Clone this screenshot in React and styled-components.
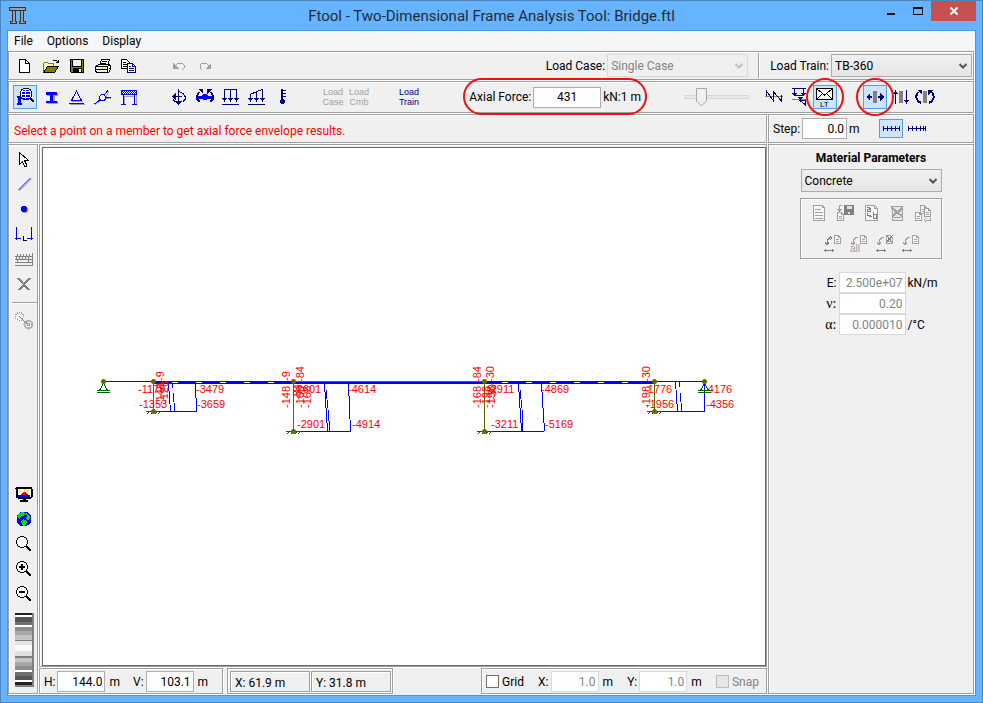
import { useState } from "react";
import styled, { createGlobalStyle, css } from "styled-components";

const GlobalStyle = createGlobalStyle`
  * {
    box-sizing: border-box;
  }
  body {
    margin: 0;
    font-family: Roboto, "Open Sans", sans-serif;
    font-size: 12px;
    line-height: 16px;
    color: #000;
  }
  input, select, button {
    font: inherit;
    color: inherit;
    margin: 0;
  }
`;

const NAVY = "#000080";
const BLUE = "#0000ff";
const GRAY = "#a0a0a0";
const DARK_GRAY = "#808080";
const OLIVE = "#666600";
const GREEN = "#006400";

const chevron = (color) =>
  `url("data:image/svg+xml,%3Csvg xmlns='http://www.w3.org/2000/svg' width='8' height='6'%3E%3Cpath d='M0.5 1L4 4.5L7.5 1' fill='none' stroke='%23${color}' stroke-width='2'/%3E%3C/svg%3E")`;

const thumb = `url("data:image/svg+xml,%3Csvg xmlns='http://www.w3.org/2000/svg' width='11' height='19'%3E%3Cpath d='M0.5 0.5h10v12.5l-5 5l-5-5z' fill='%23f0f0f0' stroke='%23a8a8a8'/%3E%3C/svg%3E")`;

// ---------- window frame ----------

const Window = styled.div`
  display: flex;
  flex-direction: column;
  min-height: 100vh;
  padding: 0 6px 6px;
  background: #66b3ff;
  border: 1px solid #4a86c0;
`;

const TitleBar = styled.header`
  display: flex;
  align-items: flex-start;
  justify-content: space-between;
  height: 29px;
`;

const TitleIcon = styled.svg`
  margin: 6px 0 0 2px;
`;

const Title = styled.h1`
  flex: 1;
  margin: 0;
  padding-left: 80px;
  text-align: center;
  font-size: 15px;
  line-height: 30px;
  font-weight: 400;
  color: #222c38;
`;

const WindowButtons = styled.div`
  display: flex;
`;

const WindowButton = styled.button`
  display: flex;
  align-items: center;
  justify-content: center;
  width: ${({ $close }) => ($close ? "45px" : "27px")};
  height: 20px;
  padding: 0;
  border: 0;
  background: ${({ $close }) => ($close ? "#c75050" : "transparent")};
`;

const Client = styled.div`
  flex: 1;
  display: flex;
  flex-direction: column;
  border: 1px solid #4f94d4;
  background: #f0f0f0;
`;

const MenuBar = styled.nav`
  display: flex;
  height: 20px;
  background: #f5f6f7;
  border-bottom: 1px solid #f0f0f0;
`;

const MenuItem = styled.button`
  padding: 1px 6px 0;
  margin-right: 2px;
  border: 0;
  background: transparent;
  line-height: 18px;
`;

const Panels = styled.div`
  flex: 1;
  display: flex;
  flex-direction: column;
  gap: 1px;
  padding: 0 1px 1px 0;
`;

const etched = css`
  border: 1px solid #a0a0a0;
  box-shadow: inset 1px 1px 0 #fff, 1px 1px 0 #fff;
`;

const Panel = styled.div`
  ${etched}
`;

// ---------- toolbars ----------

const FileBar = styled(Panel)`
  display: flex;
  align-items: flex-start;
  gap: 24px;
  height: 29px;
  padding: 1px 1px 0 3px;
`;

const ToolBar = styled(Panel)`
  display: flex;
  align-items: center;
  gap: 24px;
  height: 32px;
  padding: 0 33px 0 3px;
`;

const Group = styled.div`
  display: flex;
`;

const ToolButton = styled.button`
  position: relative;
  display: flex;
  align-items: center;
  justify-content: center;
  flex: none;
  width: 24px;
  height: ${({ $tall, $short }) => ($tall ? "26px" : $short ? "19px" : "24px")};
  margin: 0 1px;
  padding: 0;
  border: 1px solid ${({ $active }) => ($active ? "#569de5" : "transparent")};
  background: ${({ $active }) => ($active ? "#cce4fc" : "transparent")};

  ${({ $marked }) =>
    $marked &&
    css`
      &::after {
        content: "";
        position: absolute;
        inset: -8px;
        border: 2px solid #f01010;
        border-radius: 50%;
        z-index: 1;
      }
    `}
`;

const TextButton = styled(ToolButton)`
  font-family: "Liberation Sans", sans-serif;
  font-size: 9px;
  line-height: 10px;
  white-space: pre-line;
  color: ${({ disabled }) => (disabled ? GRAY : NAVY)};
`;

const Icon = styled.svg`
  flex: none;
  display: block;
  fill: none;
  overflow: visible;
  shape-rendering: crispEdges;
`;

const CaseArea = styled.div`
  flex: 1;
  display: flex;
  align-items: center;
  justify-content: flex-end;
  height: 25px;
`;

const Field = styled.label`
  display: flex;
  align-items: center;
  gap: 2px;
  white-space: nowrap;
`;

const Divider = styled.div`
  width: 2px;
  height: 25px;
  margin: 0 10px;
  background: #a0a0a0;
  border-right: 1px solid #fff;
`;

const Select = styled.select`
  appearance: none;
  width: 141px;
  height: 23px;
  padding: 0 20px 0 3px;
  border: 1px solid #acacac;
  border-radius: 0;
  background: ${chevron("555555")} no-repeat right 4px center,
    linear-gradient(#f0f0f0, #e5e5e5);
  &:disabled {
    opacity: 1;
    color: #838383;
    border-color: #d9d9d9;
    background: ${chevron("bfbfbf")} no-repeat right 4px center, #efefef;
  }
`;

const Readout = styled.div`
  position: relative;
  display: flex;
  align-items: center;
  margin-left: auto;
  padding: 0 6px;
  gap: 2px;
  &::after {
    content: "";
    position: absolute;
    inset: -9px 0 -7px;
    border: 2px solid #f01010;
    border-radius: 19px;
    pointer-events: none;
  }
`;

const TextInput = styled.input`
  width: ${({ $width }) => $width || "48px"};
  height: 21px;
  padding: 0 2px;
  border: 1px solid #abadb3;
  background: #fff;
  text-align: ${({ $center }) => ($center ? "center" : "right")};
  &:disabled {
    color: #838383;
    border-color: #d9d9d9;
  }
`;

const ScaleSlider = styled.input`
  appearance: none;
  width: 64px;
  height: 20px;
  margin: 0 -13px 0 14px;
  background: transparent;
  &::-webkit-slider-runnable-track {
    height: 4px;
    border: 1px solid #d6d6d6;
    background: #e7eaea;
  }
  &::-webkit-slider-thumb {
    appearance: none;
    width: 11px;
    height: 19px;
    margin-top: -8px;
    background: ${thumb};
  }
`;

const MessageRow = styled.div`
  display: flex;
  gap: 1px;
`;

const Message = styled(Panel)`
  flex: 1;
  height: 29px;
  padding: 1px 5px 0;
  line-height: 30px;
  color: #ff0000;
`;

const StepPanel = styled(Panel)`
  display: flex;
  align-items: center;
  width: 206px;
  height: 29px;
  padding-left: 4px;
`;

const StepGroup = styled(Group)`
  margin-left: auto;
  padding-right: 43px;
`;

// ---------- main area ----------

const Main = styled.main`
  flex: 1;
  display: flex;
  gap: 1px;
`;

const SideBar = styled(Panel)`
  display: flex;
  flex-direction: column;
  align-items: center;
  width: 30px;
  padding: 2px 0 6px 2px;
`;

const SideButton = styled.button`
  display: flex;
  align-items: center;
  justify-content: center;
  flex: none;
  width: 26px;
  height: 25px;
  padding: 0 1px 1px 0;
  border: 0;
  background: transparent;
`;

const SideRule = styled.div`
  width: 25px;
  height: 2px;
  margin: 5px 0;
  background: #a0a0a0;
  border-bottom: 1px solid #fff;
`;

const SideSpacer = styled.div`
  flex: 1;
`;

const Wheel = styled.div`
  width: 19px;
  height: 74px;
  margin-top: 6px;
  border: solid #808080;
  border-width: 0 2px 2px 0;
  background: linear-gradient(
    #222 0 2px, #fff 2px 4px, #555 4px 9px, #707070 9px 12px, #fff 12px 14px,
    #8e8e8e 14px 18px, #a8a8a8 18px 22px, #c4c4c4 22px 27px, #808080 27px 28px,
    #e4e4e4 28px 32px, #fafafa 32px 38px, #e0e0e0 38px 43px, #808080 43px 45px,
    #c4c4c4 45px 49px, #a8a8a8 49px 53px, #8e8e8e 53px 57px, #fff 57px 59px,
    #707070 59px 63px, #555 63px 67px, #fff 67px 69px, #222 69px 72px
  );
`;

const Work = styled.div`
  flex: 1;
  min-width: 0;
  display: flex;
  flex-direction: column;
  gap: 1px;
`;

const CanvasPanel = styled(Panel)`
  flex: 1;
  display: flex;
  min-height: 0;
  padding: 2px 0 0 2px;
`;

const Canvas = styled.svg`
  flex: 1;
  min-width: 0;
  height: auto;
  border: 1px solid #696969;
  background: #fff;
  fill: none;
  text {
    font: 11px "Liberation Sans", Arial, sans-serif;
    fill: #ff0000;
  }
`;

const StatusBar = styled.div`
  display: flex;
  gap: 4px;
`;

const StatusPanel = styled(Panel)`
  display: flex;
  align-items: center;
  height: 26px;
`;

const SizePanel = styled(StatusPanel)`
  width: 184px;
  gap: 13px;
  padding: 1px 4px 0;
`;

const CursorPanel = styled(StatusPanel)`
  width: 166px;
  gap: 1px;
  padding: 0 1px 0 2px;
`;

const CursorCell = styled.div`
  ${etched}
  flex: 1;
  height: 21px;
  padding: 1px 4px 0;
  line-height: 20px;
`;

const GridPanel = styled(StatusPanel)`
  width: 286px;
  margin-left: auto;
  justify-content: space-between;
  padding: 1px 7px 0 4px;
`;

const Unit = styled.span`
  padding-left: 2px;
`;

const CheckLabel = styled.label`
  display: flex;
  align-items: center;
  gap: 3px;
  color: ${({ $disabled }) => ($disabled ? "#838383" : "#000")};
`;

const CheckBox = styled.input`
  appearance: none;
  width: 13px;
  height: 13px;
  border: 1px solid #707070;
  background: #fff;
  &:checked {
    background: #569de5;
  }
  &:disabled {
    border-color: #bcbcbc;
    background: #e6e6e6;
  }
`;

const PropertyPanel = styled(Panel)`
  display: flex;
  flex-direction: column;
  align-items: center;
  width: 206px;
  padding-top: 5px;
`;

const PanelTitle = styled.h2`
  margin: 0 0 3px;
  font-size: 12px;
  line-height: 16px;
  font-weight: 700;
`;

const MaterialTools = styled.div`
  ${etched}
  display: flex;
  flex-direction: column;
  align-items: center;
  gap: 7px;
  width: 142px;
  height: 61px;
  margin: 6px 0 13px;
  padding-top: 2px;
`;

const Params = styled.div`
  display: grid;
  grid-template-columns: 68px 67px 66px;
  align-items: center;
`;

const ParamLabel = styled.label`
  padding-right: 2px;
  text-align: right;
  ${({ $greek }) =>
    $greek &&
    css`
      font-family: "Liberation Serif", serif;
      font-size: 14px;
    `}
`;

const ParamUnit = styled.span`
  padding-left: 2px;
`;

// ---------- icons ----------

const Glyph = ({ size = 20, children }) => (
  <Icon width={size} height={size} viewBox={`0 0 ${size} ${size}`} aria-hidden="true">
    {children}
  </Icon>
);

const NewIcon = () => (
  <Glyph>
    <path d="M4.5 3.5h6l4 4v9h-10z" fill="#fff" stroke="#000" />
    <path d="M10.5 3.5v4h4" stroke="#000" />
  </Glyph>
);

const OpenIcon = () => (
  <Glyph>
    <path d="M2.5 16.5v-9l1-1h3l1 1h5v3h-6l-4 6z" fill="#ffff99" stroke="#808000" />
    <path d="M2.5 16.5l4-6h11l-4 6z" fill="#808000" stroke="#000" />
    <path d="M11.5 5.5l1-1h3l2 2M17.5 3.5v3h-3" stroke="#000" />
  </Glyph>
);

const SaveIcon = () => (
  <Glyph>
    <path d="M3.5 3.5h13v13h-12l-1-1z" fill="#808000" stroke="#000" />
    <path d="M6 4h8v6H6z" fill="#f0f0f0" />
    <path d="M5.5 3.5v7h9v-7" stroke="#000" />
    <path d="M6 12h9v5H6z" fill="#000" />
    <path d="M12 13h2v3h-2z" fill="#fff" />
  </Glyph>
);

const PrintIcon = () => (
  <Glyph>
    <path d="M6.5 9.5l2-6h8l-2 6z" fill="#fff" stroke="#000" />
    <path d="M9 5.5h5M8 7.5h5" stroke="#000" />
    <path d="M2.5 10.5l3-2h11l1 2v3l-2 3h-12l-1-2z" fill="#f0f0f0" stroke="#000" />
    <path d="M2.5 10.5h12l3-2M14.5 10.5v6M3 13.5h11M16 12.5h2" stroke="#000" />
    <path d="M9 12.5h3" stroke="#d8d800" />
  </Glyph>
);

const CopyIcon = () => (
  <Glyph>
    <path d="M2.5 3.5h5l3 3v6h-8z" fill="#fff" stroke="#000" />
    <path d="M4 6.5h3M4 8.5h5M4 10.5h5" stroke="#000" />
    <path d="M8.5 7.5h5l3 3v6h-8z" fill="#fff" stroke={NAVY} />
    <path d="M13.5 7.5v3h3M10 10.5h2M10 12.5h5M10 14.5h5" stroke={NAVY} />
  </Glyph>
);

const UndoIcon = () => (
  <Glyph>
    <path d="M4 7v6h6z" fill={GRAY} />
    <path d="M6 10l3-3h4l2 2v3l-2 2" stroke={GRAY} />
  </Glyph>
);

const RedoIcon = () => (
  <Glyph>
    <path d="M16 7v6h-6z" fill={GRAY} />
    <path d="M14 10l-3-3h-4l-2 2v3l2 2" stroke={GRAY} />
  </Glyph>
);

const InspectIcon = () => (
  <Glyph>
    <path d="M2 9h5v2H6v5h1v2H2v-2h1v-5H2z" fill={BLUE} />
    <circle cx="11" cy="7" r="6" fill="#fff" stroke="#000" />
    <path d="M7 5h3v2H7zM11 5h4v2h-4zM7 8h3v2H7zM11 8h4v2h-4zM8 3h2v1H8zM11 3h3v1h-3zM8 11h2v1H8zM11 11h3v1h-3z" fill={BLUE} />
    <path d="M15 11l4 4" stroke="#000" strokeWidth="2" />
  </Glyph>
);

const SectionIcon = () => (
  <Glyph>
    <path d="M6 6h11v3h-3v5h3v3H6v-3h3V9H6z" fill={GRAY} />
    <path d="M5 5h11v3h-4v6h4v2H5v-2h4V8H5z" fill={BLUE} />
  </Glyph>
);

const SupportIcon = () => (
  <Glyph>
    <path d="M5 14.5h11M3 17.5h15" stroke={GRAY} />
    <path d="M9.5 4l-5 9.5h10z" stroke={BLUE} />
    <path d="M2 16.5h15" stroke={BLUE} />
  </Glyph>
);

const HingeIcon = () => (
  <Glyph>
    <path d="M2 17.5l6-4M13 9.5l3-5M13 11.5h5" stroke={GRAY} />
    <path d="M1.5 17l5.5-4M11.5 8l3.5-5M13 10.5h5" stroke={BLUE} />
    <circle cx="9.5" cy="10.5" r="3" stroke={BLUE} />
  </Glyph>
);

const PortalIcon = () => (
  <Glyph>
    <path d="M5.5 17V9h9M17.5 17V8" stroke={GRAY} />
    <path d="M2 3h16v5H2z" fill="#fff" />
    <path d="M3 4.5h14M3 6.5h14" stroke={BLUE} strokeDasharray="1 1" />
    <path d="M4 5.5h14" stroke={BLUE} strokeDasharray="1 1" />
    <path d="M2 3.5h16M2 7.5h16M2.5 3v5M17.5 3v5M4.5 8v9M15.5 8v9M2 17.5h5M13 17.5h5" stroke={BLUE} />
  </Glyph>
);

const NodalLoadIcon = () => (
  <Glyph>
    <path d="M9.5 2v13M3 9.5h10" stroke={NAVY} />
    <path d="M6 14h7l-3.5 4zM7 6v7L3 9.500z" fill={NAVY} />
    <path d="M10 4.5l4 2 2 3v3l-2 2M4 12l2 3" stroke={NAVY} />
  </Glyph>
);

const MemberMomentIcon = () => (
  <Glyph>
    <circle cx="10" cy="10" r="3" fill={BLUE} />
    <path d="M3 10.5h14" stroke={BLUE} strokeWidth="3" />
    <path d="M4 5l-2 4v3l3 3M16 5l2 4v3l-3 3" stroke={NAVY} strokeWidth="2" />
    <path d="M3 2h5v5zM17 2h-5v5z" fill={NAVY} />
  </Glyph>
);

const UniformLoadIcon = () => (
  <Glyph>
    <path d="M3 2.5h13M3.5 2v10M9.5 2v10M15.5 2v10M1 17.5h17" stroke={NAVY} />
    <path d="M1 11h5l-2.5 4zM7 11h5l-2.5 4zM13 11h5l-2.5 4z" fill={NAVY} />
  </Glyph>
);

const LinearLoadIcon = () => (
  <Glyph>
    <path d="M3 7.5l12-5h1M3.5 7v5M9.5 5v7M15.5 2v10M1 17.5h17" stroke={NAVY} />
    <path d="M1 11h5l-2.5 4zM7 11h5l-2.5 4zM13 11h5l-2.5 4z" fill={NAVY} />
  </Glyph>
);

const ThermalIcon = () => (
  <Glyph>
    <path d="M9 2v12" stroke={NAVY} strokeWidth="2" />
    <path d="M10 3.5h3M10 6.5h3M10 9.5h3" stroke={NAVY} />
    <circle cx="9.5" cy="14.5" r="2.5" fill={NAVY} />
  </Glyph>
);

const DiagramValuesIcon = () => (
  <Glyph>
    <path d="M2 9.5h18" stroke={DARK_GRAY} />
    <path d="M3.5 9V4l7 10V5l8 9V8" stroke={NAVY} />
  </Glyph>
);

const StepValuesIcon = () => (
  <Glyph>
    <path d="M3 12.5h15" stroke={DARK_GRAY} />
    <path d="M3 1.5h14M5.5 2v5M14.5 2v5M5 8.5h9M10 13.5h6v4l-5-4" stroke={NAVY} />
    <path d="M3 6h5l-2.5 3zM12 6h5l-2.5 3zM9 10h5l-2.5 3z" fill={NAVY} />
  </Glyph>
);

const EnvelopeIcon = () => (
  <Glyph>
    <path d="M1.5 1.5h16v11h-16z" fill="#fff" stroke="#000" />
    <path d="M2 2l7.5 6L17 2M2 12l5-5M17 12l-5-5" stroke="#000" />
    <text x="5" y="20" fill="#000" fontSize="8" fontFamily="Liberation Sans, sans-serif">
      LT
    </text>
  </Glyph>
);

const AxialIcon = () => (
  <Glyph>
    <path d="M8 4h4v12H8z" fill={DARK_GRAY} />
    <path d="M1 10l4-4v3h2v2H5v3zM19 10l-4-4v3h-2v2h2v3z" fill={NAVY} />
  </Glyph>
);

const ShearIcon = () => (
  <Glyph>
    <path d="M8 4h4v12H8z" fill={DARK_GRAY} />
    <path d="M4.5 4v13M15.5 3v12" stroke={NAVY} />
    <path d="M2 7l2.5-4L7 7zM13 13l2.5 4L18 13z" fill={NAVY} />
  </Glyph>
);

const MomentIcon = () => (
  <Glyph>
    <path d="M6 4h4v12H6z" fill={DARK_GRAY} />
    <path d="M4 16l-3-2-2-4 2-5M12 16l3-2 2-4-2-5" stroke={NAVY} strokeWidth="2" />
    <path d="M0 3h5v5zM16 3h-5v5z" fill={NAVY} />
  </Glyph>
);

const StepAllIcon = () => (
  <Glyph>
    <path d="M2 9.5h17M2.5 7v5M6.5 7v5M10.5 7v5M14.5 7v5M18.5 7v5" stroke={NAVY} />
  </Glyph>
);

const StepEndIcon = () => (
  <Glyph>
    <path d="M1 9.5h18M1.5 7v5M5.5 7v5M9.5 7v5M13.5 7v5M16.5 7v5M18.5 7v5" stroke={NAVY} />
  </Glyph>
);

const PointerIcon = () => (
  <Glyph>
    <path d="M5.5 3.5v12l3-3 2 5h2v-2l-2-4h4z" fill="#fff" stroke="#000" />
  </Glyph>
);

const LineIcon = () => (
  <Glyph>
    <path d="M5.5 17L17.5 5" stroke={GRAY} shapeRendering="auto" />
    <path d="M4.5 16L16.5 4" stroke={BLUE} shapeRendering="auto" />
  </Glyph>
);

const NodeIcon = () => (
  <Glyph>
    <circle cx="11" cy="11" r="3" fill={GRAY} />
    <circle cx="10" cy="10" r="3" fill={BLUE} />
  </Glyph>
);

const DimensionIcon = () => (
  <Glyph>
    <path d="M2.5 3v13M17.5 3v13M1 14.5h6M13 14.5h6" stroke={BLUE} />
    <path d="M9.5 12v4h3" stroke="#000" />
  </Glyph>
);

const KeyboardIcon = () => (
  <Glyph>
    <path d="M1 7.5h17M1 10.5h17M1 13.5h17M1 16.5h18M18.5 4v12" stroke={DARK_GRAY} />
    <path
      d="M3.5 5v3M6.5 5v3M9.5 5v3M12.5 5v3M15.5 5v3M2.5 8v3M5.5 8v3M8.5 8v3M11.5 8v3M14.5 8v3M3.5 11v3M14.5 11v3"
      stroke={DARK_GRAY}
    />
  </Glyph>
);

const DeleteIcon = () => (
  <Glyph>
    <path d="M4 4l11 12M16 4L5 16" stroke={DARK_GRAY} strokeWidth="2" />
  </Glyph>
);

const SnapNodeIcon = () => (
  <Glyph>
    <circle cx="5.5" cy="5.5" r="4" stroke={GRAY} strokeDasharray="1 1" />
    <path d="M5 5l8 8" stroke={DARK_GRAY} />
    <path d="M13 9v4H9z" fill={DARK_GRAY} />
    <circle cx="14.5" cy="13.5" r="4" stroke="#b0b0b0" strokeWidth="2" />
    <circle cx="14.5" cy="13.5" r="1" stroke={GRAY} />
  </Glyph>
);

const ScreenIcon = () => (
  <Glyph>
    <rect x="2.5" y="3.5" width="15" height="10" rx="1" fill="#fff" stroke="#000" strokeWidth="2" />
    <path d="M4 11h12v2H4z" fill={BLUE} />
    <path d="M7 11l2-3h3l2 3z" fill="#ff0000" />
    <path d="M5 6l2 2M15 6l-2 2M10.5 5v2" stroke="#ffd800" />
    <path d="M9 14h3v2h2v2H6v-2h3z" fill="#000" />
  </Glyph>
);

const GlobeIcon = () => (
  <Glyph>
    <circle cx="10" cy="10" r="7.5" fill={BLUE} />
    <path
      d="M5 4l4-1 2 2-2 2H7l-1 3-3-2zM12 4l4 3v3l-3 1-2-2 2-2zM9 10l4 2-1 4-3 1-2-4z"
      fill="#00e000"
    />
  </Glyph>
);

const ZoomIcon = ({ sign }) => (
  <Glyph>
    <circle cx="8" cy="8" r="5.5" fill="#f8f8f8" stroke="#000" />
    <path d="M12 12l5 5" stroke="#000" strokeWidth="2" />
    {sign && <path d="M5 7h6v2H5z" fill="#000" />}
    {sign === "plus" && <path d="M7 5h2v6H7z" fill="#000" />}
  </Glyph>
);

// small page used by every material tool
const Page = ({ x, y }) => (
  <path
    transform={`translate(${x} ${y})`}
    d="M.5.5h4l2 2v6h-6zM4.5.5v2h2M2 4.5h3M2 6.5h3"
    fill="#f8f8f8"
    stroke={GRAY}
  />
);

const MatNewIcon = () => (
  <Glyph>
    <path
      d="M4.5 2.5h9l2 2v13h-11zM13.5 2.5v2h2M6 6.5h6M6 9.5h8M6 12.5h8M6 15.5h8"
      fill="#f8f8f8"
      stroke={GRAY}
    />
  </Glyph>
);

const MatSaveIcon = () => (
  <Glyph>
    <path d="M9 2h10v10H9z" fill={DARK_GRAY} />
    <path d="M12 3h5v3h-5zM13 9h2v2h-2z" fill="#e0e0e0" />
    <path d="M7 2.5H5l-1 2v3" stroke={GRAY} />
    <path d="M1 6h6l-3 3z" fill={GRAY} />
    <Page x={2} y={9} />
  </Glyph>
);

const MatRenameIcon = () => (
  <Glyph>
    <path d="M4.5 2.5h9l3 3v12h-12zM13.5 2.5v3h3" fill="#f8f8f8" stroke={GRAY} />
    <path
      d="M6 4.5h2l1 1v3H6v-2h3M12.5 9v6h3v-4h-3M6.5 10v2l4 2M9 12v2"
      stroke={DARK_GRAY}
    />
  </Glyph>
);

const MatDeleteIcon = () => (
  <Glyph>
    <path d="M5.5 3.5h10v14h-10zM7 8.5h7M7 14.5h7" fill="#e8e8e8" stroke={GRAY} />
    <path d="M4 4l12 10M16 4L5 14" stroke={GRAY} strokeWidth="2" />
  </Glyph>
);

const MatCopyIcon = () => (
  <Glyph>
    <Page x={7} y={2} />
    <Page x={11} y={5} />
    <Page x={2} y={9} />
    <path d="M17.5 15v2h-5M13 15l-2 2 2 2" stroke={GRAY} />
  </Glyph>
);

const MatApplyIcon = ({ kind }) => (
  <Glyph>
    <Page x={12} y={1} />
    {kind === "cross" && <path d="M12 1l7 8M19 1l-7 8" stroke={DARK_GRAY} />}
    <path d="M10 3.5H8l-3 3v3M3 8l2 3 2-3" stroke={kind === "pick" ? DARK_GRAY : GRAY} />
    {kind === "pick" && <path d="M8 2l2 2-2 2" stroke={DARK_GRAY} />}
    {kind === "all" ? (
      <text x="2" y="18" fill={GRAY} fontSize="10" fontFamily="Liberation Sans, sans-serif">
        all
      </text>
    ) : (
      <path d="M2 16.5h10M3.5 15v3M10.5 15v3" stroke={DARK_GRAY} />
    )}
  </Glyph>
);

// ---------- toolbar data ----------

const FILE_TOOLS = [
  ["New", NewIcon],
  ["Open", OpenIcon],
  ["Save", SaveIcon],
  ["Print", PrintIcon],
  ["Copy", CopyIcon],
];

const PROPERTY_TOOLS = [
  ["Material parameters", InspectIcon],
  ["Section properties", SectionIcon],
  ["Support conditions", SupportIcon],
  ["Rotation release", HingeIcon],
  ["Member restraints", PortalIcon],
];

const LOAD_TOOLS = [
  ["Nodal forces", NodalLoadIcon],
  ["Member end moments", MemberMomentIcon],
  ["Uniform load", UniformLoadIcon],
  ["Linear load", LinearLoadIcon],
  ["Temperature variation", ThermalIcon],
];

const EDIT_TOOLS = [
  ["Select", PointerIcon],
  ["Insert member", LineIcon],
  ["Insert node", NodeIcon],
  ["Insert dimension line", DimensionIcon],
  ["Keyboard mode", KeyboardIcon],
  ["Delete", DeleteIcon],
];

// ---------- frame drawing ----------

const H_LABELS = [
  [138, 393, "-1179"], [196, 393, "-3479"], [139, 408, "-1353"], [197, 408, "-3659"],
  [293, 393, "-2601"], [348, 393, "-4614"], [297, 428, "-2901"], [352, 428, "-4914"],
  [487, 393, "-2911"], [541, 393, "-4869"], [491, 428, "-3211"], [545, 428, "-5169"],
  [644, 393, "-1776"], [646, 408, "-1956"], [704, 393, "-4176"], [706, 408, "-4356"],
];

const V_LABELS = [
  [164, 381, "-9"], [164, 405, "-148"], [168, 403, "-128"],
  [290, 381, "-9"], [290, 408, "-148"], [304, 382, "-84"],
  [301, 400, "-84"], [304, 408, "-168"], [311, 408, "-168"],
  [481, 382, "-84"], [481, 408, "-168"], [494, 382, "-30"],
  [490, 408, "-198"], [495, 408, "-198"], [496, 400, "-30"],
  [650, 382, "-30"], [650, 408, "-198"],
];

const NODES = [
  [103, 381], [153, 381], [153, 411], [293, 381], [293, 431],
  [484, 381], [484, 431], [654, 381], [654, 411], [704, 381],
];

const FIXED = [[153, 411], [293, 431], [484, 431], [654, 411]];
const ROLLERS = [103, 704];

function FrameModel() {
  return (
    <Canvas viewBox="43 148 722 517" role="img" aria-label="Axial force envelope">
      <g shapeRendering="crispEdges">
        <path d="M103 381.5h50M654 381.5h50" stroke={BLUE} />
        <path d="M153 382.5h501" stroke={BLUE} strokeWidth="3" />
        <path d="M172 382.5h120M502 382.5h144" stroke="#fff" strokeDasharray="6 18" />
        <path d="M293 381.5h191" stroke={OLIVE} />
        <path d="M153 411.5h44M293 431.5h58M484 431.5h60M654 411.5h51" stroke={BLUE} />
        <path
          d="M168.5 384l2 27M172.5 384v4M173.5 393l1 18M195.5 384l1 27M324.5 384l3 47M326.5 390l1 18M328.5 410l1 21M348.5 384l2 47M518.5 384l3 47M520.5 390l1 18M522.5 410v21M541.5 384l3 47M675.5 382l2 29M679.5 382v5M680.5 393l1 18M704.5 382v29"
          stroke={BLUE}
        />
        <path d="M153.5 381v30M293.5 381v50M484.5 381v50M654.5 381v30" stroke={OLIVE} />
        {FIXED.map(([x, y]) => (
          <path
            key={x}
            d={`M${x - 7} ${y + 0.5}h16M${x - 6} ${y + 3}l2-2M${x - 2} ${y + 3}l2-2M${x + 2} ${y + 3}l2-2M${x + 5} ${y + 3}l2-2`}
            stroke={GREEN}
          />
        ))}
      </g>
      {H_LABELS.map(([x, y, label]) => (
        <text key={`${x}-${y}`} x={x} y={y}>
          {label}
        </text>
      ))}
      {V_LABELS.map(([x, y, label]) => (
        <text key={`${x}-${y}`} transform={`translate(${x} ${y}) rotate(-90)`}>
          {label}
        </text>
      ))}
      {ROLLERS.map((x) => (
        <path
          key={x}
          shapeRendering="crispEdges"
          d={`M${x + 0.5} 383l-4 7.5h8zM${x - 6} 390.5h13M${x - 6} 392.5h13`}
          stroke={GREEN}
        />
      ))}
      {NODES.map(([x, y]) => (
        <circle key={`${x}-${y}`} cx={x + 0.5} cy={y + 0.5} r="2.5" fill={OLIVE} />
      ))}
    </Canvas>
  );
}

export default function App() {
  const [loadTrain, setLoadTrain] = useState("TB-360");
  const [material, setMaterial] = useState("Concrete");
  const [view, setView] = useState({ h: "144.0", v: "103.1" });
  const [step, setStep] = useState("0.0");
  const [force, setForce] = useState("431");
  const [grid, setGrid] = useState(false);

  return (
    <>
      <GlobalStyle />
      <Window>
        <TitleBar>
          <TitleIcon width="17" height="17" viewBox="0 0 17 17" shapeRendering="crispEdges">
            <path d="M0 0h17v4H0zM3 4h4v11H3zM11 4h4v11h-4zM1 14h7v3H1zM10 14h7v3h-7z" fill="#333" />
            <path d="M1 1h15v2H1zM4 4h2v11H4zM12 4h2v11h-2zM2 15h5v1H2zM11 15h5v1h-5z" fill="#a0a0a0" />
          </TitleIcon>
          <Title>Ftool - Two-Dimensional Frame Analysis Tool: Bridge.ftl</Title>
          <WindowButtons>
            <WindowButton aria-label="Minimize">
              <Glyph size={10}>
                <path d="M1 7h8v2H1z" fill="#111" />
              </Glyph>
            </WindowButton>
            <WindowButton aria-label="Maximize">
              <Glyph size={10}>
                <path d="M.5 2v6.5h9V2" stroke="#111" />
                <path d="M0 1h10v2H0z" fill="#111" />
              </Glyph>
            </WindowButton>
            <WindowButton $close aria-label="Close">
              <Glyph size={8}>
                <path d="M.5.5l7 7M7.5.5l-7 7" stroke="#fff" strokeWidth="2" shapeRendering="auto" />
              </Glyph>
            </WindowButton>
          </WindowButtons>
        </TitleBar>

        <Client>
          <MenuBar>
            <MenuItem>File</MenuItem>
            <MenuItem>Options</MenuItem>
            <MenuItem>Display</MenuItem>
          </MenuBar>

          <Panels>
            <FileBar>
              <Group>
                {FILE_TOOLS.map(([name, Drawing]) => (
                  <ToolButton key={name} $tall aria-label={name}>
                    <Drawing />
                  </ToolButton>
                ))}
              </Group>
              <Group>
                <ToolButton $tall disabled aria-label="Undo">
                  <UndoIcon />
                </ToolButton>
                <ToolButton $tall disabled aria-label="Redo">
                  <RedoIcon />
                </ToolButton>
              </Group>
              <CaseArea>
                <Field>
                  Load Case:
                  <Select disabled defaultValue="Single Case">
                    <option>Single Case</option>
                  </Select>
                </Field>
                <Divider />
                <Field>
                  Load Train:
                  <Select value={loadTrain} onChange={(e) => setLoadTrain(e.target.value)}>
                    <option>TB-360</option>
                  </Select>
                </Field>
              </CaseArea>
            </FileBar>

            <ToolBar>
              <Group>
                {PROPERTY_TOOLS.map(([name, Drawing], i) => (
                  <ToolButton key={name} $active={i === 0} aria-label={name}>
                    <Drawing />
                  </ToolButton>
                ))}
              </Group>
              <Group>
                {LOAD_TOOLS.map(([name, Drawing]) => (
                  <ToolButton key={name} aria-label={name}>
                    <Drawing />
                  </ToolButton>
                ))}
              </Group>
              <Group>
                <TextButton disabled>{"Load\nCase"}</TextButton>
                <TextButton disabled>{"Load\nCmb"}</TextButton>
              </Group>
              <Group>
                <TextButton>{"Load\nTrain"}</TextButton>
              </Group>
              <Readout>
                <label htmlFor="force">Axial Force:</label>
                <TextInput
                  id="force"
                  $width="68px"
                  $center
                  value={force}
                  onChange={(e) => setForce(e.target.value)}
                />
                <span>kN:1 m</span>
              </Readout>
              <ScaleSlider type="range" disabled defaultValue="20" aria-label="Diagram scale" />
              <Group>
                <ToolButton aria-label="Result values">
                  <DiagramValuesIcon />
                </ToolButton>
                <ToolButton aria-label="Step values">
                  <StepValuesIcon />
                </ToolButton>
                <ToolButton $active $marked aria-label="Load train envelope">
                  <EnvelopeIcon />
                </ToolButton>
              </Group>
              <Group>
                <ToolButton $active $marked aria-label="Axial force">
                  <AxialIcon />
                </ToolButton>
                <ToolButton aria-label="Shear force">
                  <ShearIcon />
                </ToolButton>
                <ToolButton aria-label="Bending moment">
                  <MomentIcon />
                </ToolButton>
              </Group>
            </ToolBar>

            <MessageRow>
              <Message>Select a point on a member to get axial force envelope results.</Message>
              <StepPanel>
                <Field>
                  Step:
                  <TextInput $width="45px" value={step} onChange={(e) => setStep(e.target.value)} />
                  m
                </Field>
                <StepGroup>
                  <ToolButton $short $active aria-label="Constant step">
                    <StepAllIcon />
                  </ToolButton>
                  <ToolButton $short aria-label="Step with ends">
                    <StepEndIcon />
                  </ToolButton>
                </StepGroup>
              </StepPanel>
            </MessageRow>

            <Main>
              <SideBar>
                {EDIT_TOOLS.map(([name, Drawing]) => (
                  <SideButton key={name} aria-label={name}>
                    <Drawing />
                  </SideButton>
                ))}
                <SideRule />
                <SideButton disabled aria-label="Snap to node">
                  <SnapNodeIcon />
                </SideButton>
                <SideSpacer />
                <SideButton aria-label="Fit to screen">
                  <ScreenIcon />
                </SideButton>
                <SideButton aria-label="World view">
                  <GlobeIcon />
                </SideButton>
                <SideButton aria-label="Zoom window">
                  <ZoomIcon />
                </SideButton>
                <SideButton aria-label="Zoom in">
                  <ZoomIcon sign="plus" />
                </SideButton>
                <SideButton aria-label="Zoom out">
                  <ZoomIcon sign="minus" />
                </SideButton>
                <Wheel />
              </SideBar>

              <Work>
                <CanvasPanel>
                  <FrameModel />
                </CanvasPanel>
                <StatusBar>
                  <SizePanel>
                    <Field>
                      H:
                      <TextInput
                        value={view.h}
                        onChange={(e) => setView({ ...view, h: e.target.value })}
                      />
                      <Unit>m</Unit>
                    </Field>
                    <Field>
                      V:
                      <TextInput
                        value={view.v}
                        onChange={(e) => setView({ ...view, v: e.target.value })}
                      />
                      <Unit>m</Unit>
                    </Field>
                  </SizePanel>
                  <CursorPanel>
                    <CursorCell>X: 61.9 m</CursorCell>
                    <CursorCell>Y: 31.8 m</CursorCell>
                  </CursorPanel>
                  <GridPanel>
                    <CheckLabel>
                      <CheckBox
                        type="checkbox"
                        checked={grid}
                        onChange={(e) => setGrid(e.target.checked)}
                      />
                      Grid
                    </CheckLabel>
                    <Field>
                      X:
                      <TextInput disabled defaultValue="1.0" />
                      <Unit>m</Unit>
                    </Field>
                    <Field>
                      Y:
                      <TextInput disabled defaultValue="1.0" />
                      <Unit>m</Unit>
                    </Field>
                    <CheckLabel $disabled>
                      <CheckBox type="checkbox" disabled />
                      Snap
                    </CheckLabel>
                  </GridPanel>
                </StatusBar>
              </Work>

              <PropertyPanel>
                <PanelTitle>Material Parameters</PanelTitle>
                <Select
                  aria-label="Material"
                  value={material}
                  onChange={(e) => setMaterial(e.target.value)}
                >
                  <option>Concrete</option>
                </Select>
                <MaterialTools>
                  <Group>
                    <ToolButton disabled aria-label="New material"><MatNewIcon /></ToolButton>
                    <ToolButton disabled aria-label="Save material"><MatSaveIcon /></ToolButton>
                    <ToolButton disabled aria-label="Rename material"><MatRenameIcon /></ToolButton>
                    <ToolButton disabled aria-label="Delete material"><MatDeleteIcon /></ToolButton>
                    <ToolButton disabled aria-label="Copy material"><MatCopyIcon /></ToolButton>
                  </Group>
                  <Group>
                    <ToolButton disabled aria-label="Pick from member"><MatApplyIcon kind="pick" /></ToolButton>
                    <ToolButton disabled aria-label="Apply to all"><MatApplyIcon kind="all" /></ToolButton>
                    <ToolButton disabled aria-label="Remove from members"><MatApplyIcon kind="cross" /></ToolButton>
                    <ToolButton disabled aria-label="Apply to members"><MatApplyIcon kind="set" /></ToolButton>
                  </Group>
                </MaterialTools>
                <Params>
                  <ParamLabel htmlFor="elastic">E:</ParamLabel>
                  <TextInput id="elastic" $width="67px" disabled defaultValue="2.500e+07" />
                  <ParamUnit>kN/m</ParamUnit>
                  <ParamLabel htmlFor="poisson" $greek>ν:</ParamLabel>
                  <TextInput id="poisson" $width="67px" disabled defaultValue="0.20" />
                  <ParamUnit />
                  <ParamLabel htmlFor="thermal" $greek>α:</ParamLabel>
                  <TextInput id="thermal" $width="67px" disabled defaultValue="0.000010" />
                  <ParamUnit>/°C</ParamUnit>
                </Params>
              </PropertyPanel>
            </Main>
          </Panels>
        </Client>
      </Window>
    </>
  );
}
